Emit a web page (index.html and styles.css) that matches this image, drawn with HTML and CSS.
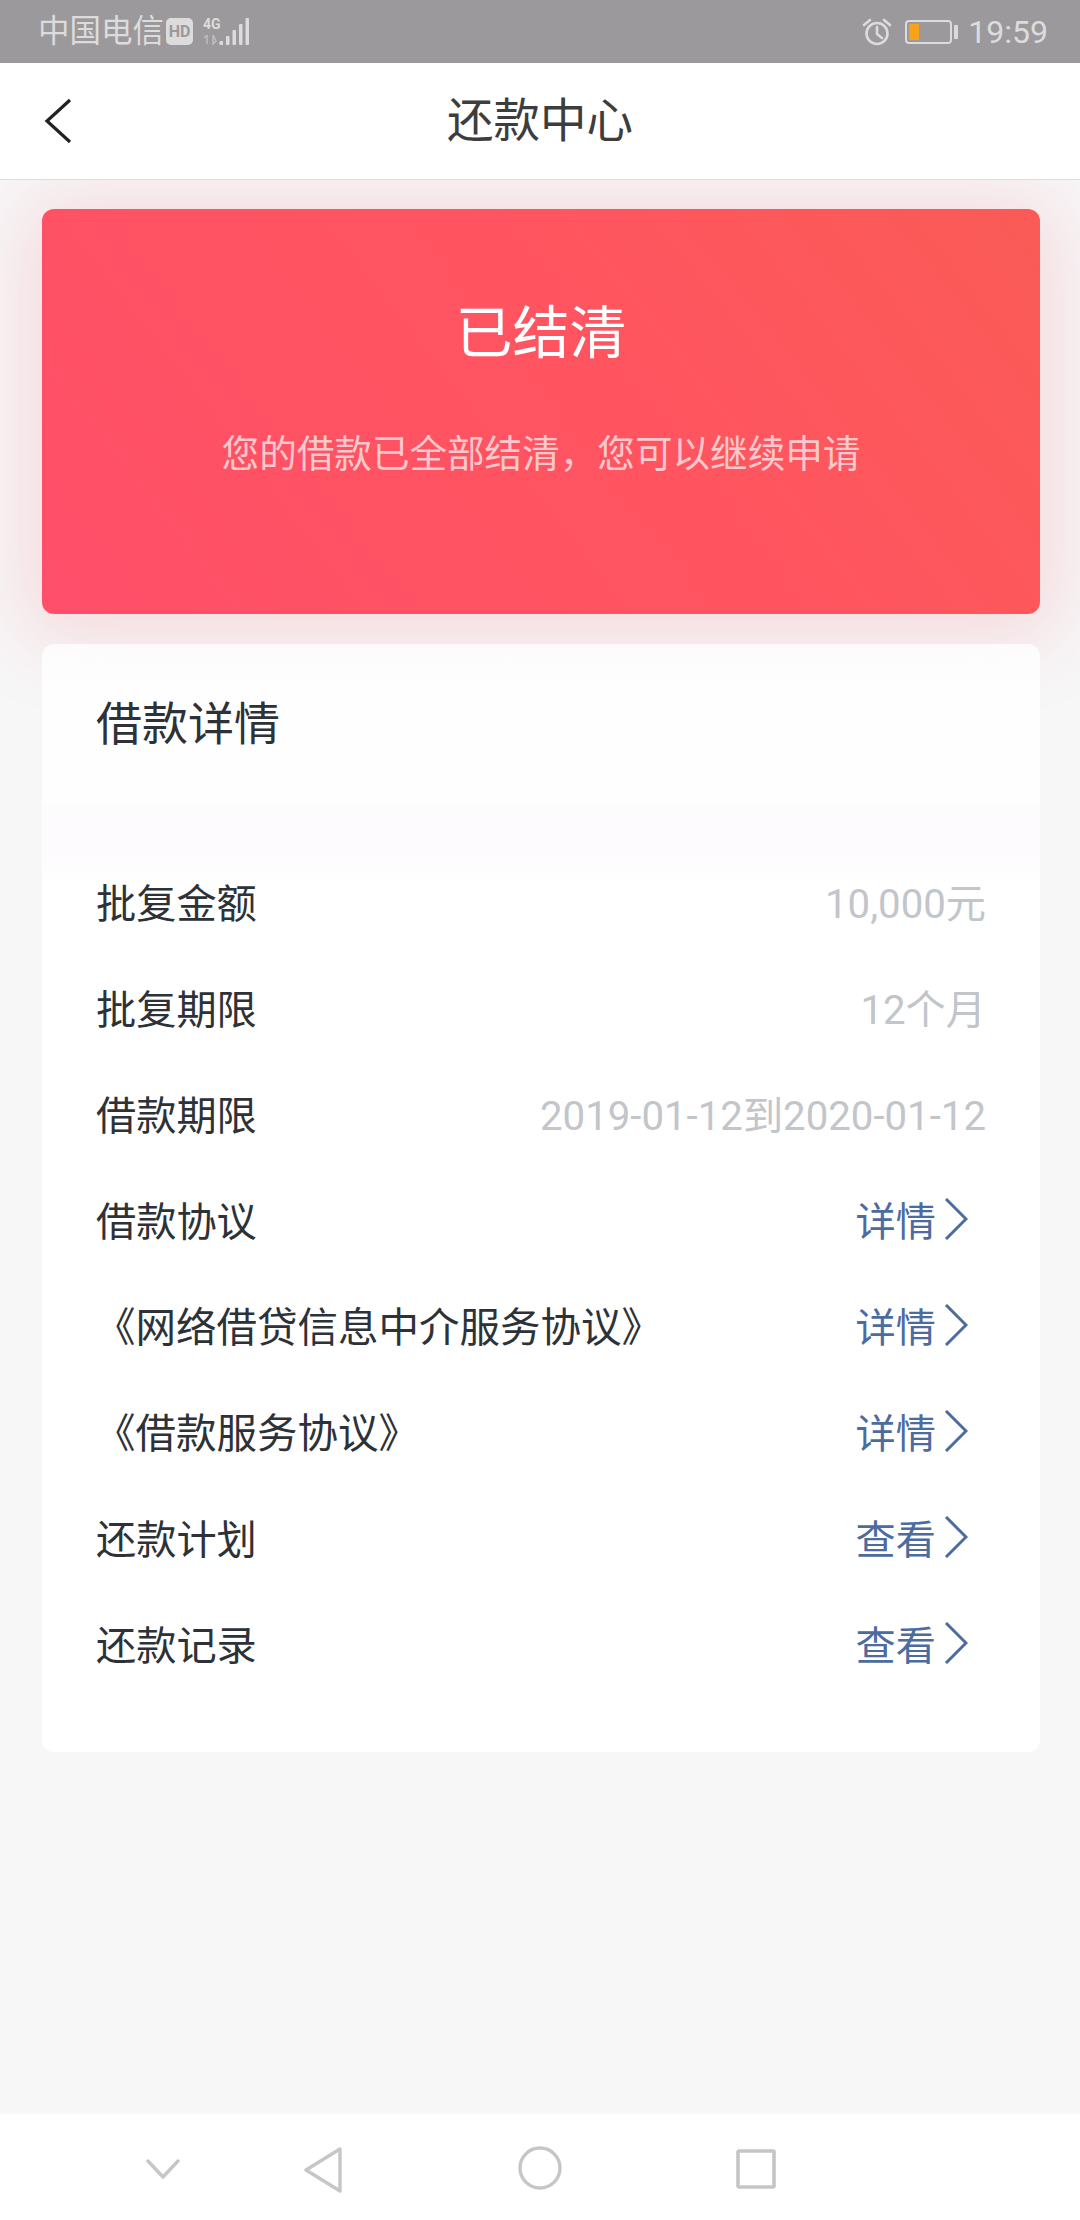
FILE: index.html
```html
<!DOCTYPE html>
<html lang="zh-CN">
<head>
<meta charset="utf-8">
<title>还款中心</title>
<link rel="stylesheet" href="styles.css">
</head>
<body>
<div class="app">
  <div class="status">
    <div class="status-left">
      <span class="carrier">中国电信</span>
      <span class="hd">HD</span>
      <svg class="signal" width="48" height="30" viewBox="0 0 48 30">
        <text x="1" y="12" class="net">4G</text>
        <path d="M5 18v9M2 21l3-3M11 18v9l3-3z" stroke="#bcbbbd" stroke-width="1.6" fill="none"/>
        <rect x="17.5" y="24" width="3.5" height="4" rx="1" fill="#dcdcdc"/>
        <rect x="24" y="19" width="3.5" height="9" rx="1" fill="#dcdcdc"/>
        <rect x="30.5" y="13" width="3.5" height="15" rx="1" fill="#dcdcdc"/>
        <rect x="37" y="7" width="3.5" height="21" rx="1" fill="#dcdcdc"/>
        <rect x="43.5" y="1" width="3.5" height="27" rx="1" fill="#dcdcdc"/>
      </svg>
    </div>
    <div class="status-right">
      <svg class="alarm" width="30" height="30" viewBox="0 0 30 30" fill="none" stroke="#dcdcdc" stroke-width="2.6">
        <circle cx="15" cy="16.5" r="10.5"/>
        <path d="M15 10v7l5 4M2 8l6-5M28 8l-6-5" stroke-linecap="round"/>
      </svg>
      <span class="battery"><span class="battery-level"></span></span>
      <span class="battery-cap"></span>
      <span class="time">19:59</span>
    </div>
  </div>

  <header class="topbar">
    <svg class="back" width="28" height="46" viewBox="0 0 28 46" fill="none" stroke="#222" stroke-width="3.2">
      <path d="M26 2 3 23l23 21"/>
    </svg>
    <h1 class="page-title">还款中心</h1>
  </header>

  <main class="content">
    <section class="hero">
      <div class="hero-title">已结清</div>
      <div class="hero-sub">您的借款已全部结清，您可以继续申请</div>
    </section>

    <section class="details">
      <h2 class="details-title">借款详情</h2>
      <ul class="rows">
        <li class="row"><span>批复金额</span><span class="val">10,000元</span></li>
        <li class="row"><span>批复期限</span><span class="val">12个月</span></li>
        <li class="row"><span>借款期限</span><span class="val">2019-01-12到2020-01-12</span></li>
        <li class="row"><span>借款协议</span><span class="link">详情<svg class="chev" width="24" height="42" viewBox="0 0 24 42"><path d="M2 1l20 20L2 41"/></svg></span></li>
        <li class="row"><span class="book">《网络借贷信息中介服务协议》</span><span class="link">详情<svg class="chev" width="24" height="42" viewBox="0 0 24 42"><path d="M2 1l20 20L2 41"/></svg></span></li>
        <li class="row"><span class="book">《借款服务协议》</span><span class="link">详情<svg class="chev" width="24" height="42" viewBox="0 0 24 42"><path d="M2 1l20 20L2 41"/></svg></span></li>
        <li class="row"><span>还款计划</span><span class="link">查看<svg class="chev" width="24" height="42" viewBox="0 0 24 42"><path d="M2 1l20 20L2 41"/></svg></span></li>
        <li class="row"><span>还款记录</span><span class="link">查看<svg class="chev" width="24" height="42" viewBox="0 0 24 42"><path d="M2 1l20 20L2 41"/></svg></span></li>
      </ul>
    </section>
  </main>

  <nav class="navbar">
    <svg class="nav-down" width="34" height="20" viewBox="0 0 34 20" fill="none" stroke="#c6c6c6" stroke-width="3.4" stroke-linecap="round" stroke-linejoin="round"><path d="M2 2l15 16L32 2"/></svg>
    <svg class="nav-back" width="38" height="46" viewBox="0 0 38 46" fill="none" stroke="#c6c6c6" stroke-width="3.4" stroke-linejoin="round"><path d="M36 2 2 23l34 21z"/></svg>
    <svg class="nav-home" width="44" height="44" viewBox="0 0 44 44" fill="none" stroke="#c6c6c6" stroke-width="3.4"><circle cx="22" cy="22" r="20"/></svg>
    <svg class="nav-recent" width="40" height="40" viewBox="0 0 40 40" fill="none" stroke="#c6c6c6" stroke-width="3.6" stroke-linejoin="round"><rect x="2" y="2" width="36" height="36" rx="1"/></svg>
  </nav>
</div>
</body>
</html>
```

FILE: styles.css
```css
* { box-sizing: border-box; }
html, body { margin: 0; padding: 0; }
body {
  width: 1080px;
  height: 2220px;
  overflow: hidden;
  background: #f7f7f8;
  font-family: Roboto, "Noto Sans CJK SC", "Noto Sans", sans-serif;
}
.app { width: 1080px; height: 2220px; display: flex; flex-direction: column; }

.status {
  position: relative;
  z-index: 3;
  height: 63px;
  flex: none;
  background: #9b999c;
  color: #dcdcdc;
  display: flex;
  justify-content: space-between;
  align-items: center;
  padding: 0 32px 0 38px;
}
.status-left, .status-right { display: flex; align-items: center; }
.carrier { font-size: 31.5px; line-height: 40px; }
.hd {
  width: 27px;
  height: 27px;
  margin-left: 2px;
  border-radius: 5px;
  background: #dcdcdc;
  color: #9b999c;
  font-size: 16px;
  font-weight: 700;
  line-height: 27px;
  text-align: center;
}
.signal { margin-left: 9px; }
.net { font-size: 14px; font-weight: 700; fill: #dcdcdc; }
.alarm { margin-right: 13px; }
.battery {
  width: 47px;
  height: 24px;
  border: 2px solid #dcdcdc;
  border-radius: 4px;
  padding: 2px;
  display: block;
}
.battery-level { display: block; width: 10px; height: 100%; background: #f9a11b; border-radius: 1px; }
.battery-cap { width: 4px; height: 14px; margin-left: 2px; background: #dcdcdc; border-radius: 1px; }
.time { font-size: 32px; line-height: 40px; margin-left: 10px; }

.topbar {
  position: relative;
  z-index: 3;
  height: 117px;
  flex: none;
  background: #fff;
  border-bottom: 1px solid #dedede;
  display: flex;
  align-items: center;
  justify-content: center;
}
.back { position: absolute; left: 44px; top: 35px; }
.page-title { margin: 0; font-size: 46.5px; font-weight: 400; color: #3d3d3d; line-height: 60px; }

.content {
  flex: 1;
  padding: 29px 40px 0 42px;
  display: flex;
  flex-direction: column;
  gap: 30px;
}
.hero {
  position: relative;
  z-index: 1;
  height: 405px;
  flex: none;
  border-radius: 12px;
  background: linear-gradient(52deg, #ff4f6b 0%, #ff5263 30%, #ff5560 60%, #fa5b56 100%);
  box-shadow: 0 8px 80px 20px rgba(245, 75, 85, 0.16);
  color: #fff;
  text-align: center;
  padding-top: 87px;
}
.hero-title { font-size: 57px; line-height: 76px; }
.hero-sub { margin-top: 57px; font-size: 37.6px; line-height: 50px; color: #fcc8cc; }

.details {
  position: relative;
  z-index: 2;
  height: 1108px;
  flex: none;
  border-radius: 12px;
  padding: 50px 54px 0;
  background: linear-gradient(180deg,
    rgba(255, 255, 255, 0.8) 0,
    #fefefe 60px,
    #fefefe 156px,
    #fdfbfd 170px,
    #fdfbfd 205px,
    #ffffff 240px);
}
.details-title {
  margin: 0;
  font-size: 46px;
  font-weight: 400;
  line-height: 60px;
  color: #2d3238;
}
.rows { list-style: none; margin: 93px 0 0; padding: 0; }
.row {
  height: 106px;
  display: flex;
  justify-content: space-between;
  align-items: center;
  font-size: 40.2px;
  color: #2d3238;
}
.book { font-size: 40.5px; margin-left: -1px; }
.val { color: #c2c5ca; }
.link { color: #4c6b9f; display: flex; align-items: center; padding-right: 18px; }
.chev { margin: 2px 0 0 8px; fill: none; stroke: #4c6b9f; stroke-width: 3; }

.navbar {
  position: relative;
  height: 106px;
  flex: none;
  background: #fff;
}
.navbar svg { position: absolute; }
.nav-down { left: 146px; top: 45px; }
.nav-back { left: 304px; top: 33px; }
.nav-home { left: 518px; top: 32px; }
.nav-recent { left: 736px; top: 35px; }
```
